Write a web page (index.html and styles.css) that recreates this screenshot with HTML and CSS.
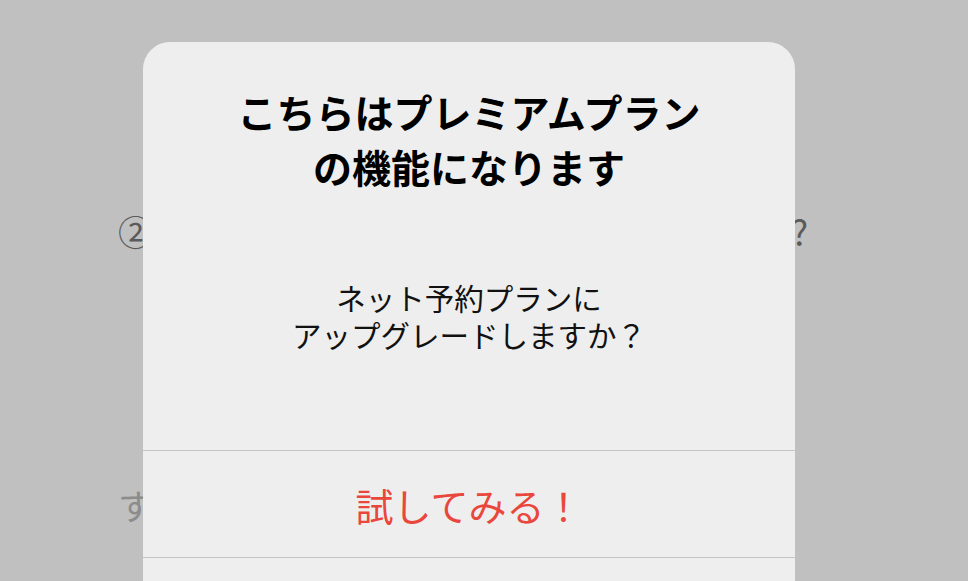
FILE: index.html
```html
<!DOCTYPE html>
<html lang="ja">
<head>
    <meta charset="UTF-8">
    <title>プレミアムプラン</title>
    <link rel="stylesheet" href="styles.css">
</head>
<body>
<div id="page">
    <div class="row row-q">
        <span>②ネット</span>
        <span>?</span>
    </div>
    <div class="row row-a">
        <span>すぐに</span>
        <span>。</span>
    </div>
</div>

<div id="alert">
    <div class="alert-body">
        <h1 class="alert-title">こちらはプレミアムプラン<br>の機能になります</h1>
        <p class="alert-msg">
            <span class="line">ネット予約プランに</span>
            <span class="line">アップグレードしますか？</span>
        </p>
    </div>
    <button type="button" class="alert-btn try">試してみる！</button>
    <div class="alert-more"></div>
</div>
</body>
</html>
```

FILE: styles.css
```css
html, body {
    margin: 0;
    height: 100%;
}

body {
    position: relative;
    background-color: #c0c0c0;
    overflow: hidden;
    font-family: "Noto Sans CJK JP", "Noto Sans", sans-serif;
}

#page {
    padding: 208px 160px 0 118px;
}

.row {
    display: flex;
    justify-content: space-between;
    font-size: 35px;
    line-height: 46px;
}

.row-q {
    color: #5a5a5a;
}

.row-a {
    margin-top: 228px;
    color: #8c8c8c;
}

#alert {
    position: absolute;
    left: 143px;
    top: 42px;
    width: 652px;
    background-color: #eeeeee;
    border-radius: 27px;
}

.alert-body {
    padding: 42px 20px 98px;
    text-align: center;
}

.alert-title {
    margin: 0;
    font-size: 39px;
    line-height: 55px;
    font-weight: 700;
    color: #000;
}

.alert-msg {
    display: flex;
    flex-direction: column;
    align-items: center;
    gap: 2px;
    margin: 86px 0 0;
    font-size: 29.5px;
    line-height: 35px;
    color: #111;
}

.alert-btn {
    display: block;
    width: 100%;
    height: 107px;
    padding: 0;
    border: 0;
    border-top: 1px solid #c4c4c4;
    background: none;
    font-family: inherit;
    font-size: 38px;
    color: #e9463c;
    outline: none;
}

.alert-more {
    height: 60px;
    border-top: 1px solid #c4c4c4;
}
```
